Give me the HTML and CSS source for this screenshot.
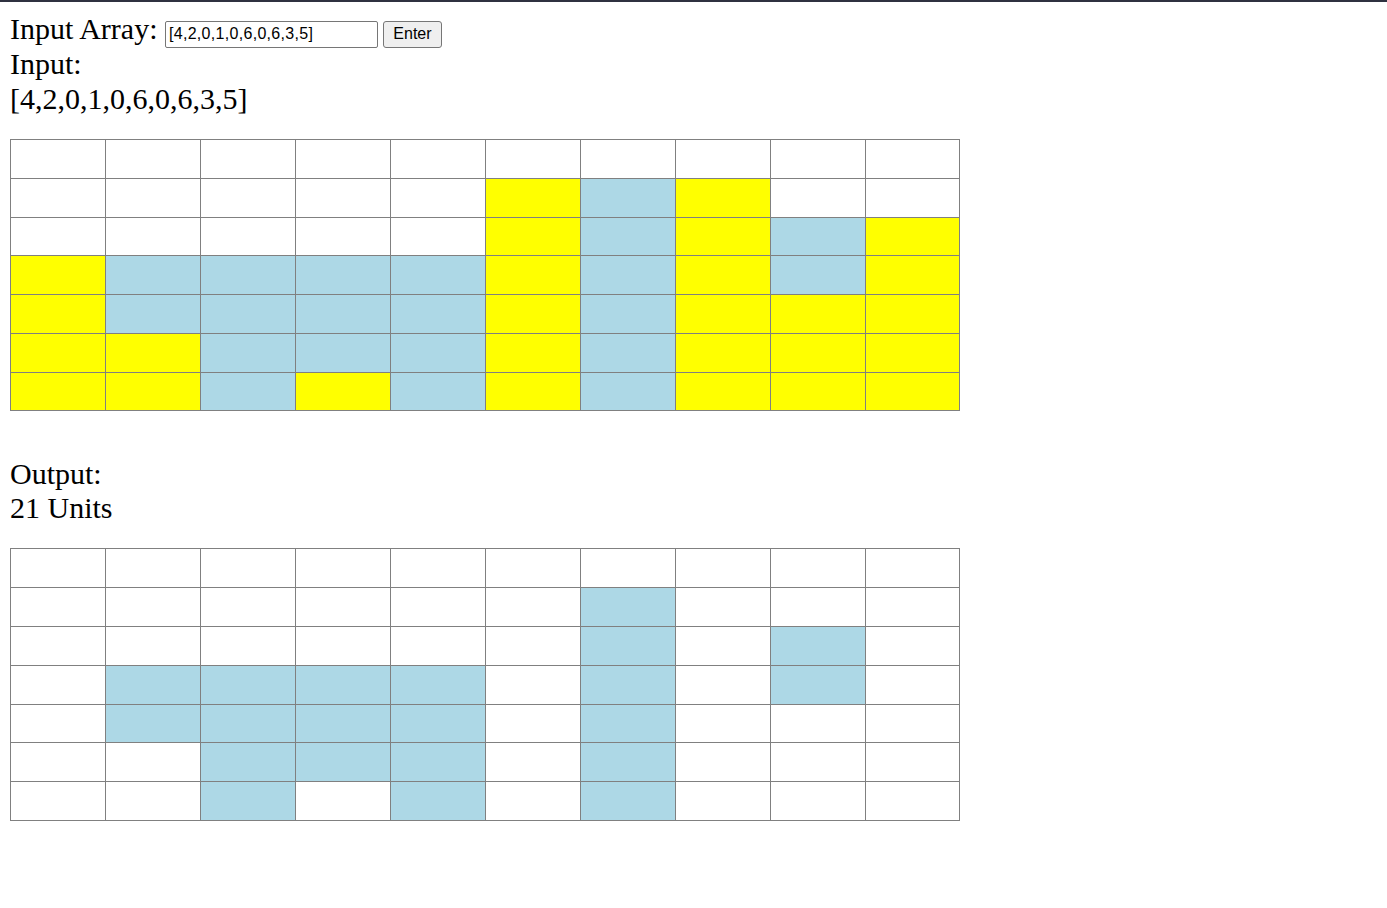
FILE: index.html
```html
<!DOCTYPE html>
<html>
<head>
<meta charset="utf-8">
<title>Trapping Rain Water</title>
<link rel="stylesheet" href="styles.css">
</head>
<body>
<div class="topbar"></div>
<main class="page">
  <div class="line tall first">Input Array: <input class="arr-input" type="text" value="[4,2,0,1,0,6,0,6,3,5]"><button class="enter-btn">Enter</button></div>
  <div class="line tall">Input:</div>
  <div class="line tall">[4,2,0,1,0,6,0,6,3,5]</div>

  <div class="grid grid-in">
    <div class="c"></div><div class="c"></div><div class="c"></div><div class="c"></div><div class="c"></div><div class="c"></div><div class="c"></div><div class="c"></div><div class="c"></div><div class="c"></div>
    <div class="c"></div><div class="c"></div><div class="c"></div><div class="c"></div><div class="c"></div><div class="c y"></div><div class="c b"></div><div class="c y"></div><div class="c"></div><div class="c"></div>
    <div class="c"></div><div class="c"></div><div class="c"></div><div class="c"></div><div class="c"></div><div class="c y"></div><div class="c b"></div><div class="c y"></div><div class="c b"></div><div class="c y"></div>
    <div class="c y"></div><div class="c b"></div><div class="c b"></div><div class="c b"></div><div class="c b"></div><div class="c y"></div><div class="c b"></div><div class="c y"></div><div class="c b"></div><div class="c y"></div>
    <div class="c y"></div><div class="c b"></div><div class="c b"></div><div class="c b"></div><div class="c b"></div><div class="c y"></div><div class="c b"></div><div class="c y"></div><div class="c y"></div><div class="c y"></div>
    <div class="c y"></div><div class="c y"></div><div class="c b"></div><div class="c b"></div><div class="c b"></div><div class="c y"></div><div class="c b"></div><div class="c y"></div><div class="c y"></div><div class="c y"></div>
    <div class="c y"></div><div class="c y"></div><div class="c b"></div><div class="c y"></div><div class="c b"></div><div class="c y"></div><div class="c b"></div><div class="c y"></div><div class="c y"></div><div class="c y"></div>
  </div>

  <div class="output-block">
    <div class="line">Output:</div>
    <div class="line">21 Units</div>
  </div>

  <div class="grid grid-out">
    <div class="c"></div><div class="c"></div><div class="c"></div><div class="c"></div><div class="c"></div><div class="c"></div><div class="c"></div><div class="c"></div><div class="c"></div><div class="c"></div>
    <div class="c"></div><div class="c"></div><div class="c"></div><div class="c"></div><div class="c"></div><div class="c"></div><div class="c b"></div><div class="c"></div><div class="c"></div><div class="c"></div>
    <div class="c"></div><div class="c"></div><div class="c"></div><div class="c"></div><div class="c"></div><div class="c"></div><div class="c b"></div><div class="c"></div><div class="c b"></div><div class="c"></div>
    <div class="c"></div><div class="c b"></div><div class="c b"></div><div class="c b"></div><div class="c b"></div><div class="c"></div><div class="c b"></div><div class="c"></div><div class="c b"></div><div class="c"></div>
    <div class="c"></div><div class="c b"></div><div class="c b"></div><div class="c b"></div><div class="c b"></div><div class="c"></div><div class="c b"></div><div class="c"></div><div class="c"></div><div class="c"></div>
    <div class="c"></div><div class="c"></div><div class="c b"></div><div class="c b"></div><div class="c b"></div><div class="c"></div><div class="c b"></div><div class="c"></div><div class="c"></div><div class="c"></div>
    <div class="c"></div><div class="c"></div><div class="c b"></div><div class="c"></div><div class="c b"></div><div class="c"></div><div class="c b"></div><div class="c"></div><div class="c"></div><div class="c"></div>
  </div>
</main>
</body>
</html>
```

FILE: styles.css
```css
html, body {
  margin: 0;
  padding: 0;
  background: #ffffff;
}

body {
  font-family: "Liberation Serif", "Times New Roman", serif;
  font-size: 30px;
  color: #000000;
}

.topbar {
  height: 2px;
  background: #2f3140;
}

.page {
  padding: 9px 10px 0 10px;
}

.line {
  line-height: 34px;
  white-space: nowrap;
}

.line.tall {
  line-height: 35px;
}

.line.first {
  height: 35px;
}

.arr-input {
  box-sizing: border-box;
  width: 213px;
  height: 27px;
  margin: 0;
  padding: 1px 3px;
  border: 1px solid #767676;
  border-radius: 2px;
  font-family: "Liberation Sans", Arial, sans-serif;
  font-size: 16px;
  letter-spacing: 0.3px;
  color: #000000;
  background: #ffffff;
}

.enter-btn {
  box-sizing: border-box;
  width: 59px;
  height: 27px;
  margin: 0 0 0 5px;
  padding: 1px 6px;
  border: 1px solid #767676;
  border-radius: 3px;
  background: #efefef;
  font-family: "Liberation Sans", Arial, sans-serif;
  font-size: 16px;
  color: #000000;
}

.grid {
  display: grid;
  width: 950px;
  box-sizing: border-box;
  padding: 1px;
  gap: 1px;
  background: #808080;
  grid-template-columns: repeat(9, 94px) 93px;
}

.grid-in {
  margin-top: 23px;
  grid-template-rows: 38px 38px 37px 38px 38px 38px 37px;
}

.output-block {
  margin-top: 46px;
}

.grid-out {
  margin-top: 23px;
  grid-template-rows: 38px 38px 38px 38px 37px 38px 38px;
}

.c {
  background: #ffffff;
}

.c.y {
  background: #ffff00;
}

.c.b {
  background: #add8e6;
}
```
